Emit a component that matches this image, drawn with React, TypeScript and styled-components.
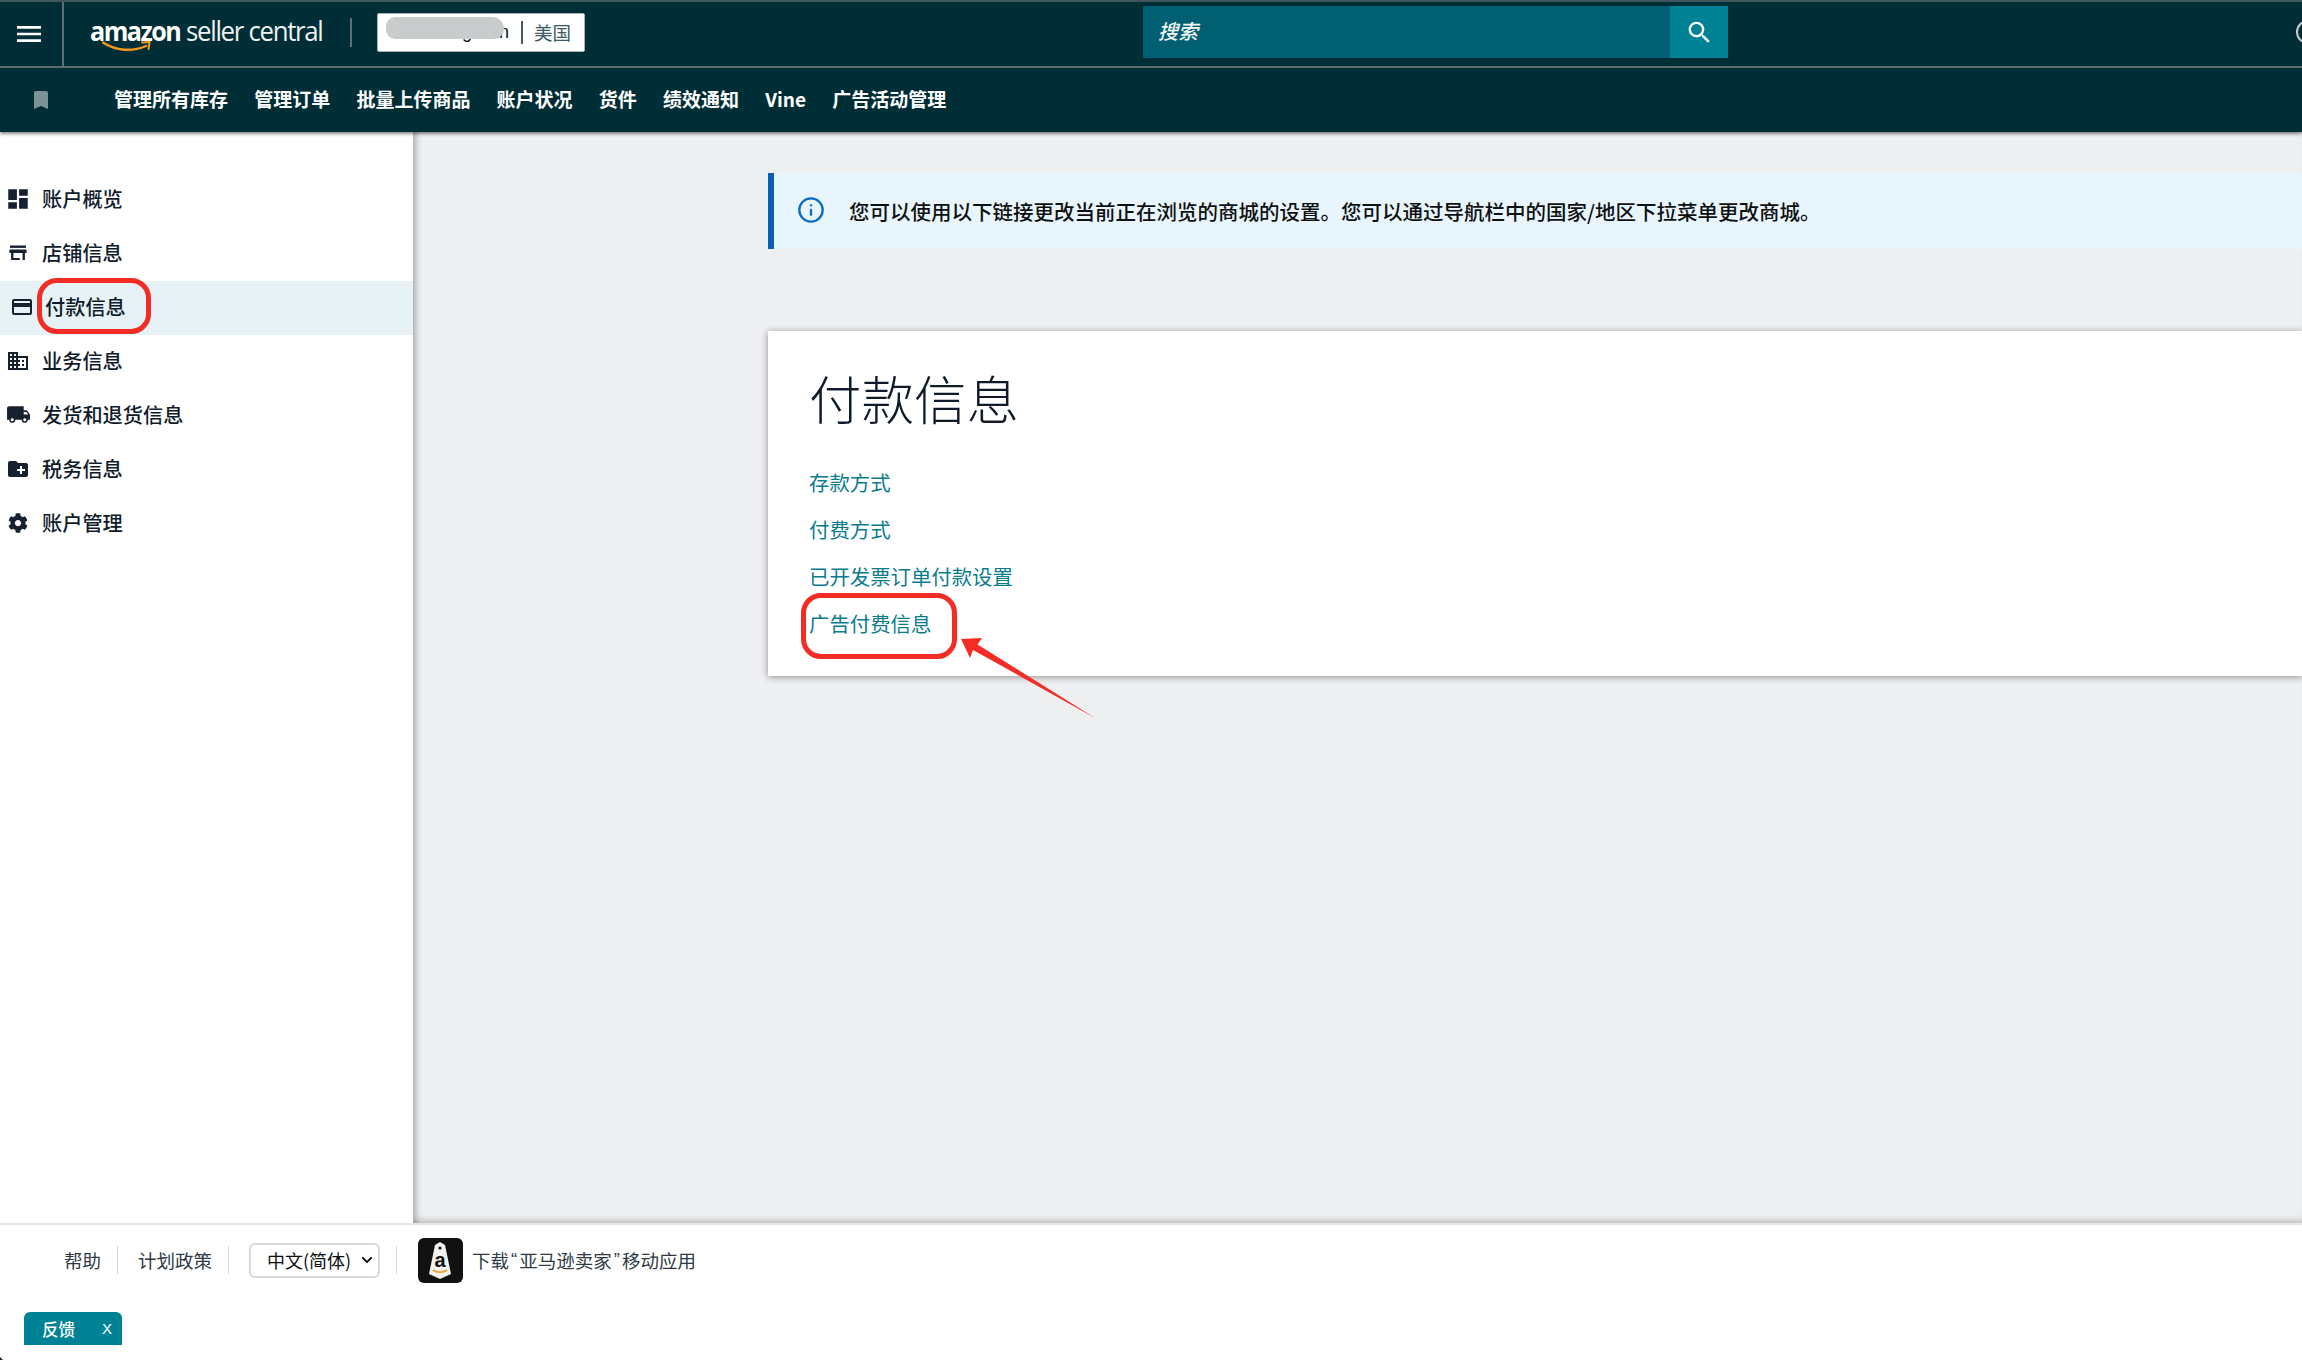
import React from 'react'

import styled, { createGlobalStyle } from 'styled-components'
import { FaChevronDown, FaCog } from 'react-icons/fa'
import { FiInfo } from 'react-icons/fi'
import {
  MdBookmark,
  MdBusiness,
  MdCreateNewFolder,
  MdDashboard,
  MdLocalShipping,
  MdMenu,
  MdOutlineCreditCard,
  MdSearch,
} from 'react-icons/md'

const GlobalStyle = createGlobalStyle`
  html, body {
    margin: 0;
    padding: 0;
    background: #fff;
  }
  body {
    font-family: "Noto Sans CJK SC", "Liberation Sans", sans-serif;
  }
`

const Page = styled.div`
  position: relative;
  width: 2302px;
  height: 1360px;
  display: flex;
  flex-direction: column;
  overflow: hidden;
`

const TopBar = styled.header`
  flex: none;
  height: 60px;
  padding-bottom: 4px;
  display: flex;
  align-items: center;
  background: #002e36;
  border-top: 2px solid #3f575c;
  border-bottom: 2px solid #5f6f72;
`

const MenuButton = styled.div`
  flex: none;
  align-self: stretch;
  width: 58px;
  padding-right: 4px;
  margin-bottom: -4px;
  display: flex;
  align-items: center;
  justify-content: center;
  color: #fff;
  border-right: 2px solid #5f6f72;
`

const Logo = styled.div`
  flex: none;
  position: relative;
  width: 234px;
  margin-left: 26px;
  display: flex;
  align-items: baseline;
  height: 44px;
  color: #fff;
  font-family: "Open Sans", sans-serif;
  line-height: 40px;
`

const LogoBrand = styled.span`
  font-size: 27px;
  font-weight: 700;
  letter-spacing: -1.6px;
  transform: scaleX(0.93);
  transform-origin: left;
  width: 96px;
`

const LogoProduct = styled.span`
  font-size: 28px;
  font-weight: 400;
  letter-spacing: -1.4px;
  color: #eef2f2;
  transform: scaleX(0.92);
  transform-origin: left;
  white-space: nowrap;
`

const LogoSmile = styled.svg`
  position: absolute;
  left: 12px;
  top: 31px;
`

const BarDivider = styled.span`
  flex: none;
  width: 2px;
  height: 29px;
  margin: 0 25px 0 26px;
  background: #5f6f72;
`

const StoreBox = styled.div`
  flex: none;
  position: relative;
  width: 208px;
  height: 39px;
  box-sizing: border-box;
  display: flex;
  align-items: center;
  background: #fff;
  border: 1px solid #aab4b6;
  border-radius: 2px;
`

const StoreName = styled.span`
  flex: none;
  width: 131px;
  text-align: right;
  font-size: 18px;
  color: #0f1111;
  font-family: "Liberation Sans", sans-serif;
`

const StoreBlur = styled.span`
  position: absolute;
  left: 8px;
  top: 3px;
  width: 118px;
  height: 22px;
  background: #c9cccc;
  border-radius: 11px 14px 12px 11px;
`

const StoreDivider = styled.span`
  flex: none;
  width: 2px;
  height: 23px;
  margin: 0 11px 0 12px;
  background: #4a5a60;
`

const StoreRegion = styled.span`
  font-size: 18.5px;
  color: #3c5a66;
  line-height: 1;
`

const SearchBox = styled.div`
  flex: none;
  width: 585px;
  height: 52px;
  margin-left: 558px;
  display: flex;
  background: #005f70;
`

const SearchPlaceholder = styled.span`
  flex: 1;
  padding-left: 15px;
  line-height: 50px;
  font-size: 20px;
  font-style: italic;
  font-weight: 500;
  color: #f2f6f6;
`

const SearchButton = styled.div`
  flex: none;
  width: 58px;
  display: flex;
  align-items: center;
  justify-content: center;
  background: #008296;
  color: #fff;
`

const ProfileEdge = styled.span`
  flex: none;
  width: 24px;
  height: 24px;
  margin-left: 568px;
  box-sizing: border-box;
  border: 2px solid #c4cccd;
  border-radius: 50%;
`

const NavBar = styled.nav`
  position: relative;
  z-index: 2;
  flex: none;
  height: 64px;
  padding-left: 29px;
  display: flex;
  align-items: center;
  background: #002e36;
  box-shadow: 0 2px 3px rgba(0, 0, 0, 0.45);
  color: #7d9296;
`

const NavItems = styled.div`
  margin: -2px 0 0 61px;
  display: flex;
  gap: 26.2px;
`

const NavItem = styled.span`
  font-size: 19px;
  font-weight: 600;
  line-height: 26px;
  color: #fff;
  white-space: nowrap;
`

const Body = styled.div`
  flex: 1;
  min-height: 0;
  display: flex;
`

const Sidebar = styled.aside`
  flex: none;
  width: 413px;
  padding-top: 41px;
  background: #fff;
`

const SideItem = styled.div<{ $active?: boolean }>`
  position: relative;
  height: 54px;
  box-sizing: border-box;
  padding-bottom: 3px;
  display: flex;
  align-items: center;
  gap: ${(p) => (p.$active ? '13px' : '14px')};
  padding-left: ${(p) => (p.$active ? '12px' : '8px')};
  background: ${(p) => (p.$active ? '#e6f2f5' : 'transparent')};
  font-size: 20.2px;
  font-weight: 500;
  color: #0f1b2b;
`

const SideIcon = styled.span`
  flex: none;
  width: 20px;
  height: 20px;
  display: flex;
  align-items: center;
  justify-content: center;
  color: #16202e;

  svg {
    flex: none;
  }
`

const SideRing = styled.span`
  position: absolute;
  left: 37px;
  top: -3px;
  width: 114px;
  height: 56px;
  box-sizing: border-box;
  border: 5px solid #f32d26;
  border-radius: 20px;
`

const Main = styled.main`
  flex: 1;
  min-width: 0;
  padding: 41px 0 0 355px;
  background: #eeeff1;
  box-shadow: inset 7px 0 6px -4px rgba(0, 0, 0, 0.28), inset 0 -7px 6px -4px rgba(0, 0, 0, 0.18);
`

const InfoBanner = styled.div`
  height: 76px;
  box-sizing: border-box;
  display: flex;
  align-items: center;
  padding-left: 23px;
  background: #e8f5fd;
  border-left: 6px solid #0a60b5;
  font-size: 20.5px;
  font-weight: 500;
  color: #0f1111;
  white-space: nowrap;
`

const InfoIcon = styled.span`
  flex: none;
  width: 28px;
  height: 28px;
  margin: -3px 24px 0 0;
  color: #0a6cc4;
`

const Card = styled.section`
  position: relative;
  margin-top: 82px;
  height: 345px;
  box-sizing: border-box;
  padding: 34px 0 0 41px;
  background: #fff;
  box-shadow: 0 1px 7px rgba(0, 0, 0, 0.4);
`

const Title = styled.h1`
  margin: 0 0 30px 0;
  font-size: 52.5px;
  font-weight: 300;
  line-height: 64px;
  color: #0f1b2b;
`

const CardLink = styled.div`
  position: relative;
  width: max-content;
  font-size: 20.4px;
  line-height: 47px;
  color: #0a7c8e;
`

const LinkRing = styled.span`
  position: absolute;
  left: -8px;
  top: -7px;
  width: 156px;
  height: 66px;
  box-sizing: border-box;
  border: 5px solid #f32d26;
  border-radius: 20px;
`

const Arrow = styled.svg`
  position: absolute;
  left: 182px;
  top: 298px;
`

const Footer = styled.footer`
  position: relative;
  flex: none;
  height: 137px;
  box-sizing: border-box;
  background: #fff;
  border-top: 2px solid #e6e6e6;
`

const FooterRow = styled.div`
  height: 70px;
  padding-left: 64px;
  display: flex;
  align-items: center;
  font-size: 18.5px;
  color: #2f3a44;
`

const FooterDivider = styled.span`
  flex: none;
  width: 1px;
  height: 28px;
  margin: 0 20px 0 16px;
  background: #d8d8d8;
`

const SelectWrap = styled.div`
  flex: none;
  position: relative;
  width: 131px;
  height: 35px;
`

const LanguageSelect = styled.select`
  width: 100%;
  height: 100%;
  padding-left: 16px;
  box-sizing: border-box;
  appearance: none;
  background: #fff;
  border: 2px solid #d5d9d9;
  border-radius: 6px;
  font-family: inherit;
  font-size: 18px;
  color: #0f1111;
`

const SelectChevron = styled.span`
  position: absolute;
  right: 7px;
  top: 11px;
  display: flex;
  color: #0f1111;
  pointer-events: none;
`

const AppIcon = styled.svg`
  flex: none;
  margin: 0 9px 0 1px;
`

const Quote = styled.span`
  padding: 0 2px;
  font-family: "Liberation Sans", sans-serif;
`

const Feedback = styled.div`
  margin: 17px 0 0 24px;
  width: 98px;
  height: 33px;
  box-sizing: border-box;
  padding: 0 10px 0 18px;
  display: flex;
  align-items: center;
  justify-content: space-between;
  background: #008296;
  border-radius: 6px 6px 0 0;
  font-size: 16.5px;
  font-weight: 500;
  color: #fff;
`

const FeedbackClose = styled.span`
  font-family: "Liberation Sans", sans-serif;
  font-size: 15px;
  font-weight: 400;
`

const CornerMark = styled.span`
  position: absolute;
  left: 0;
  bottom: 0;
  width: 3px;
  height: 3px;
  background: #222;
  clip-path: polygon(0 0, 100% 100%, 0 100%);
`

// store icon from the account menu, no package has this exact shape
const StoreIcon = () => (
  <svg width="20" height="20" viewBox="0 0 20 20" fill="currentColor">
    <rect x="2" y="2.5" width="16" height="2.4" />
    <path d="M1.5 6.5h17v3.6h-1.6V17H14.6v-6.9H5.4V15h6.4v2H3.1v-6.9H1.5z" />
  </svg>
)

const sideItems = [
  { label: '账户概览', icon: <MdDashboard size={26} /> },
  { label: '店铺信息', icon: <StoreIcon /> },
  { label: '付款信息', icon: <MdOutlineCreditCard size={24} />, active: true },
  { label: '业务信息', icon: <MdBusiness size={24} /> },
  { label: '发货和退货信息', icon: <MdLocalShipping size={25} /> },
  { label: '税务信息', icon: <MdCreateNewFolder size={24} /> },
  { label: '账户管理', icon: <FaCog size={20} /> },
]

const navItems = ['管理所有库存', '管理订单', '批量上传商品', '账户状况', '货件', '绩效通知', 'Vine', '广告活动管理']

const App: React.FC = () => {
  return (
    <Page>
      <GlobalStyle />
      <TopBar>
        <MenuButton>
          <MdMenu size={32} />
        </MenuButton>
        <Logo>
          <LogoBrand>amazon</LogoBrand>
          <LogoProduct>seller central</LogoProduct>
          <LogoSmile width="50" height="12" viewBox="0 0 50 12" fill="none">
            <path d="M1 1.5C14 10 30 11 44 5" stroke="#f3991f" strokeWidth="2.4" strokeLinecap="round" />
            <path d="M40 1.5l7.5-.5-1 7" stroke="#f3991f" strokeWidth="2" strokeLinecap="round" />
          </LogoSmile>
        </Logo>
        <BarDivider />
        <StoreBox>
          <StoreName>gxxxn</StoreName>
          <StoreBlur />
          <StoreDivider />
          <StoreRegion>美国</StoreRegion>
        </StoreBox>
        <SearchBox>
          <SearchPlaceholder>搜索</SearchPlaceholder>
          <SearchButton>
            <MdSearch size={29} />
          </SearchButton>
        </SearchBox>
        <ProfileEdge />
      </TopBar>

      <NavBar>
        <MdBookmark size={24} />
        <NavItems>
          {navItems.map((item) => (
            <NavItem key={item}>{item}</NavItem>
          ))}
        </NavItems>
      </NavBar>

      <Body>
        <Sidebar>
          {sideItems.map((item) => (
            <SideItem key={item.label} $active={item.active}>
              <SideIcon>{item.icon}</SideIcon>
              {item.label}
              {item.active && <SideRing />}
            </SideItem>
          ))}
        </Sidebar>

        <Main>
          <InfoBanner>
            <InfoIcon>
              <FiInfo size={28} />
            </InfoIcon>
            您可以使用以下链接更改当前正在浏览的商城的设置。您可以通过导航栏中的国家/地区下拉菜单更改商城。
          </InfoBanner>

          <Card>
            <Title>付款信息</Title>
            <CardLink>存款方式</CardLink>
            <CardLink>付费方式</CardLink>
            <CardLink>已开发票订单付款设置</CardLink>
            <CardLink>
              广告付费信息
              <LinkRing />
            </CardLink>
            <Arrow width="150" height="95" viewBox="0 0 150 95">
              <polygon points="11,10 32,9 27.5,15.5 145,89 23,21 20,29" fill="#f32d26" />
            </Arrow>
          </Card>
        </Main>
      </Body>

      <Footer>
        <FooterRow>
          帮助
          <FooterDivider />
          计划政策
          <FooterDivider />
          <SelectWrap>
            <LanguageSelect defaultValue="zh">
              <option value="zh">中文(简体)</option>
            </LanguageSelect>
            <SelectChevron>
              <FaChevronDown size={12} />
            </SelectChevron>
          </SelectWrap>
          <FooterDivider />
          <AppIcon width="45" height="45" viewBox="0 0 45 45">
            <rect width="45" height="45" rx="6" fill="#111" />
            <path d="M17 7l5-3 5 3 6 29-11 5-11-5z" fill="#f1f1ee" />
            <circle cx="22" cy="10" r="1.6" fill="#111" />
            <text x="22" y="29" textAnchor="middle" fontFamily="Liberation Sans" fontWeight="700" fontSize="20" fill="#111">
              a
            </text>
            <path d="M15 32c4 3 10 3 14 0" stroke="#f3991f" strokeWidth="1.6" fill="none" />
          </AppIcon>
          下载<Quote>“</Quote>亚马逊卖家<Quote>”</Quote>移动应用
        </FooterRow>
        <Feedback>
          反馈
          <FeedbackClose>X</FeedbackClose>
        </Feedback>
        <CornerMark />
      </Footer>
    </Page>
  )
}

export default App
